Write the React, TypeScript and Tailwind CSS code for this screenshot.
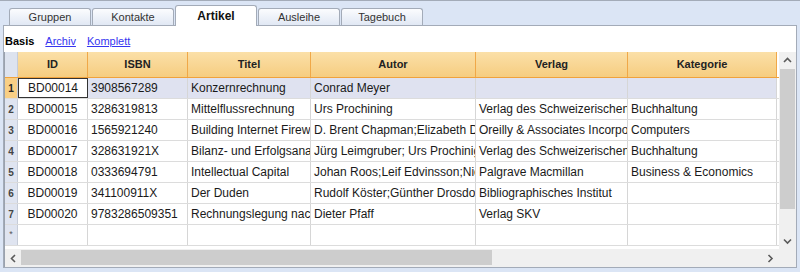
import React from 'react';

const tabs = ['Gruppen', 'Kontakte', 'Artikel', 'Ausleihe', 'Tagebuch'];

const columns = [
  { key: 'id', label: 'ID', width: 'w-[70px]', center: true },
  { key: 'isbn', label: 'ISBN', width: 'w-[100px]' },
  { key: 'titel', label: 'Titel', width: 'w-[123px]' },
  { key: 'autor', label: 'Autor', width: 'w-[165px]' },
  { key: 'verlag', label: 'Verlag', width: 'w-[152px]' },
  { key: 'kategorie', label: 'Kategorie', width: 'w-[149px]' },
];

type Row = Record<string, string>;

const rows: Row[] = [
  { id: 'BD00014', isbn: '3908567289', titel: 'Konzernrechnung', autor: 'Conrad Meyer', verlag: '', kategorie: '' },
  { id: 'BD00015', isbn: '3286319813', titel: 'Mittelflussrechnung', autor: 'Urs Prochining', verlag: 'Verlag des Schweizerischen Kaufmännischen Verbandes', kategorie: 'Buchhaltung' },
  { id: 'BD00016', isbn: '1565921240', titel: 'Building Internet Firewalls', autor: 'D. Brent Chapman;Elizabeth D. Zwicky', verlag: 'Oreilly & Associates Incorporated', kategorie: 'Computers' },
  { id: 'BD00017', isbn: '328631921X', titel: 'Bilanz- und Erfolgsanalyse', autor: 'Jürg Leimgruber; Urs Prochinig', verlag: 'Verlag des Schweizerischen Kaufmännischen Verbandes', kategorie: 'Buchhaltung' },
  { id: 'BD00018', isbn: '0333694791', titel: 'Intellectual Capital', autor: 'Johan Roos;Leif Edvinsson;Nicola C. Dragonetti', verlag: 'Palgrave Macmillan', kategorie: 'Business & Economics' },
  { id: 'BD00019', isbn: '341100911X', titel: 'Der Duden', autor: 'Rudolf Köster;Günther Drosdowski', verlag: 'Bibliographisches Institut', kategorie: '' },
  { id: 'BD00020', isbn: '9783286509351', titel: 'Rechnungslegung nach OR', autor: 'Dieter Pfaff', verlag: 'Verlag SKV', kategorie: '' },
];

function Chevron({ dir }: { dir: 'up' | 'down' | 'left' | 'right' }) {
  const d = {
    up: 'M1 5 L4.5 1.5 L8 5',
    down: 'M1 1.5 L4.5 5 L8 1.5',
    left: 'M5 1 L1.5 4.5 L5 8',
    right: 'M1.5 1 L5 4.5 L1.5 8',
  }[dir];
  const vertical = dir === 'up' || dir === 'down';
  return (
    <svg width={vertical ? 9 : 7} height={vertical ? 7 : 9} viewBox={vertical ? '0 0 9 7' : '0 0 7 9'}>
      <path d={d} fill="none" stroke="#5a5a5a" strokeWidth={1.6} />
    </svg>
  );
}

export default function App() {
  return (
    <div
      className="w-[800px] h-[272px] bg-[#dbe5f5] border-t border-[#a3abb8] overflow-hidden"
      style={{ fontFamily: '"Liberation Sans", Arial, sans-serif' }}
    >
      {/* Tab strip */}
      <div className="h-[24px] flex items-end pl-[9px] gap-[1px] relative z-10">
        {tabs.map((t) =>
          t === 'Artikel' ? (
            <div
              key={t}
              className="w-[82px] h-[21px] -mb-[1px] bg-white border border-b-0 border-[#a3abb8] rounded-t-[3px] flex items-center justify-center text-[12px] font-bold text-[#111]"
            >
              {t}
            </div>
          ) : (
            <div
              key={t}
              className="w-[82px] h-[17px] bg-gradient-to-b from-[#fbfcfe] to-[#e1e8f4] border border-b-0 border-[#a3abb8] rounded-t-[3px] flex items-center justify-center text-[11px] text-[#333]"
            >
              {t}
            </div>
          )
        )}
      </div>

      {/* Panel */}
      <div className="mx-[3px] h-[243px] bg-white border border-[#a3abb8] flex flex-col">
        <div className="h-[26px] flex items-center gap-[11px] pl-[1px] pt-[4px] text-[11px]">
          <span className="font-bold text-black">Basis</span>
          <span className="underline text-[#3535f0]">Archiv</span>
          <span className="underline text-[#3535f0]">Komplett</span>
        </div>

        {/* Grid */}
        <div className="flex-1 flex flex-col border-l border-[#9aa2ae]">
          <div className="flex flex-1">
            <div className="flex-1 flex flex-col">
              {/* Header */}
              <div className="flex h-[26px] border-b border-[#f0a23c]">
                <div className="w-[13px] bg-[#dde3ef] border-r border-[#c6ccd8]" />
                {columns.map((c) => (
                  <div
                    key={c.key}
                    className={`${c.width} bg-gradient-to-b from-[#fbe0a8] to-[#f6cd80] border-r border-[#f0a848] flex items-center justify-center text-[11px] font-bold text-[#222]`}
                  >
                    {c.label}
                  </div>
                ))}
              </div>

              {/* Body */}
              {rows.map((r, i) => {
                const selected = i === 0;
                return (
                  <div key={r.id} className="flex h-[21px] border-b border-[#dcdcdc]">
                    <div
                      className={`w-[13px] border-r border-[#c6ccd8] flex items-center justify-center text-[10px] font-bold ${
                        selected ? 'bg-[#f9cf85] text-[#222]' : 'bg-[#dfe4f0] text-[#444]'
                      }`}
                    >
                      {i + 1}
                    </div>
                    {columns.map((c) => {
                      const current = selected && c.key === 'id';
                      return (
                        <div
                          key={c.key}
                          className={`${c.width} overflow-hidden whitespace-nowrap flex items-center text-[12px] text-[#1a1a1a] ${
                            c.center ? 'justify-center' : 'pl-[3px]'
                          } ${
                            current
                              ? 'bg-white border border-[#333]'
                              : selected
                              ? 'bg-[#dfe2f0] border-r border-[#d6d6d6]'
                              : 'bg-white border-r border-[#d6d6d6]'
                          }`}
                        >
                          {r[c.key]}
                        </div>
                      );
                    })}
                  </div>
                );
              })}

              {/* New row */}
              <div className="flex h-[21px] border-b border-[#dcdcdc]">
                <div className="w-[13px] bg-[#dfe4f0] border-r border-[#c6ccd8] flex items-center justify-center text-[9px] text-[#555]">
                  *
                </div>
                {columns.map((c) => (
                  <div key={c.key} className={`${c.width} bg-white border-r border-[#d6d6d6]`} />
                ))}
              </div>
              <div className="flex-1 bg-white" />
            </div>

            {/* Vertical scrollbar */}
            <div className="w-[17px] bg-[#f0f0f0] flex flex-col items-center">
              <div className="h-[16px] flex items-center justify-center">
                <Chevron dir="up" />
              </div>
              <div className="w-[15px] h-[140px] mt-[1px] bg-[#cdcdcd]" />
              <div className="flex-1" />
              <div className="h-[16px] flex items-center justify-center">
                <Chevron dir="down" />
              </div>
            </div>
          </div>

          {/* Horizontal scrollbar */}
          <div className="h-[18px] flex bg-[#f0f0f0]">
            <div className="w-[16px] flex items-center justify-center">
              <Chevron dir="left" />
            </div>
            <div className="w-[471px] h-[15px] mt-[1px] bg-[#cdcdcd]" />
            <div className="flex-1" />
            <div className="w-[17px] flex items-center justify-center">
              <Chevron dir="right" />
            </div>
            <div className="w-[17px] bg-[#f0f0f0]" />
          </div>
        </div>
      </div>
    </div>
  );
}
